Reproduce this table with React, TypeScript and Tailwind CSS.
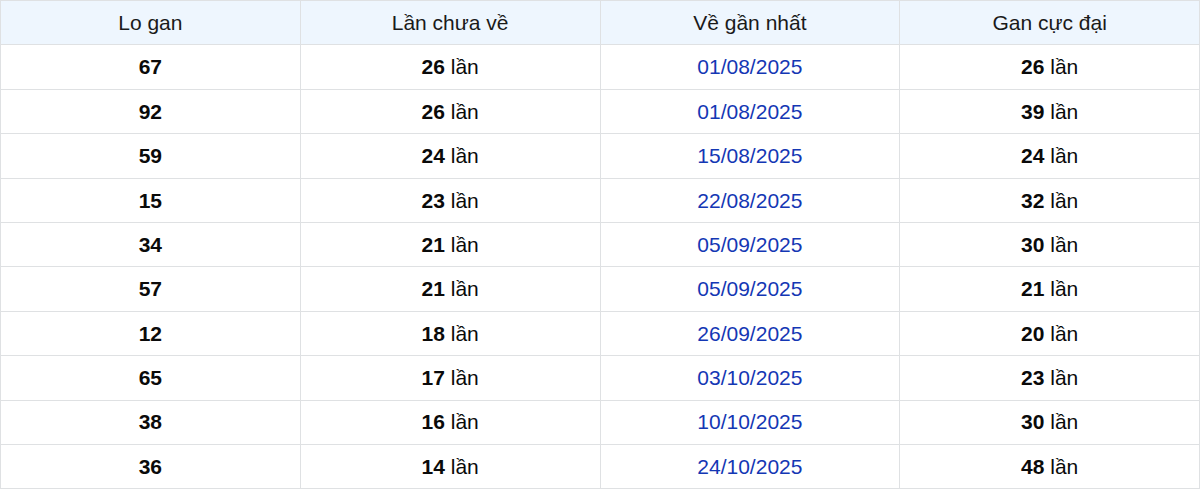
import React from "react";

const rows = [
  ["67", "26", "01/08/2025", "26"],
  ["92", "26", "01/08/2025", "39"],
  ["59", "24", "15/08/2025", "24"],
  ["15", "23", "22/08/2025", "32"],
  ["34", "21", "05/09/2025", "30"],
  ["57", "21", "05/09/2025", "21"],
  ["12", "18", "26/09/2025", "20"],
  ["65", "17", "03/10/2025", "23"],
  ["38", "16", "10/10/2025", "30"],
  ["36", "14", "24/10/2025", "48"],
];

export default function App() {
  return (
    <div className="w-[1200px] bg-white" style={{ fontFamily: '"Liberation Sans", Arial, sans-serif' }}>
      <table className="w-full border-collapse table-fixed text-[21px] text-[#0a0a0a]">
        <thead>
          <tr className="h-[44.4px] bg-[#eef6fe]">
            {["Lo gan", "Lần chưa về", "Về gần nhất", "Gan cực đại"].map((h) => (
              <th key={h} className="border border-[#dfe1e3] font-normal text-center text-[#1a1a1a] p-0">
                {h}
              </th>
            ))}
          </tr>
        </thead>
        <tbody>
          {rows.map((r, i) => (
            <tr key={i} className="h-[44.4px]">
              <td className="border border-[#dfe1e3] text-center font-bold p-0">{r[0]}</td>
              <td className="border border-[#dfe1e3] text-center p-0">
                <b>{r[1]}</b> lần
              </td>
              <td className="border border-[#dfe1e3] text-center text-[#1437b4] p-0">{r[2]}</td>
              <td className="border border-[#dfe1e3] text-center p-0">
                <b>{r[3]}</b> lần
              </td>
            </tr>
          ))}
        </tbody>
      </table>
    </div>
  );
}
